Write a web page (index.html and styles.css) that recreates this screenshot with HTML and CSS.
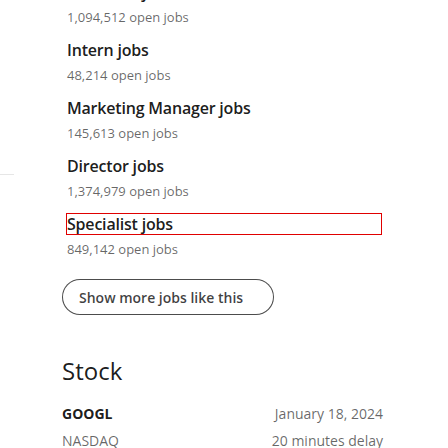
FILE: index.html
```html
<!DOCTYPE html>
<html lang="en">
<head>
<meta charset="utf-8">
<title>Jobs</title>
<link rel="stylesheet" href="styles.css">
</head>
<body>
<div class="page">
  <aside class="side"><div class="side-rule"></div></aside>
  <main class="main">
    <ul class="jobs">
      <li class="job"><a class="job-title">Associate jobs</a><div class="job-count">1,094,512 open jobs</div></li>
      <li class="job"><a class="job-title">Intern jobs</a><div class="job-count">48,214 open jobs</div></li>
      <li class="job"><a class="job-title">Marketing Manager jobs</a><div class="job-count">145,613 open jobs</div></li>
      <li class="job"><a class="job-title">Director jobs</a><div class="job-count">1,374,979 open jobs</div></li>
      <li class="job"><a class="job-title is-marked">Specialist jobs</a><div class="job-count">849,142 open jobs</div></li>
    </ul>
    <button class="more-btn">Show more jobs like this</button>
    <section class="stock">
      <h2 class="stock-title">Stock</h2>
      <div class="stock-row">
        <span class="ticker">GOOGL</span>
        <span class="meta">January 18, 2024</span>
      </div>
      <div class="stock-row">
        <span class="exchange">NASDAQ</span>
        <span class="meta">20 minutes delay</span>
      </div>
    </section>
  </main>
</div>
</body>
</html>
```

FILE: styles.css
```css
* { box-sizing: border-box; }
html, body { margin: 0; padding: 0; background: #fff; }
body {
  font-family: "Open Sans", "Noto Sans", sans-serif;
  color: rgba(0,0,0,.9);
  overflow: hidden;
  height: 448px;
}
.page { display: flex; }
.side { width: 14px; flex: none; }
.side-rule { margin-top: 174px; height: 1px; background: #e6e6e6; }
.main { width: 321px; margin-left: 48px; flex: none; }
.jobs {
  list-style: none;
  margin: -18px 0 0;
  padding: 0 2px 0 5px;
}
.job { margin-bottom: 13px; }
.job:last-child { margin-bottom: 0; }
.job-title {
  display: block;
  font-size: 16px;
  font-weight: 600;
  line-height: 20px;
  color: rgba(0,0,0,.9);
  letter-spacing: -0.2px;
}
.job-title.is-marked { outline: 1px solid #e00000; }
.job-count {
  margin-top: 5px;
  font-size: 13px;
  line-height: 20px;
  color: rgba(0,0,0,.6);
}
.more-btn {
  display: block;
  margin-top: 20px;
  width: 212px;
  height: 36px;
  padding: 0 16px;
  text-align: left;
  border: 1px solid rgba(0,0,0,.7);
  border-radius: 18px;
  background: #fff;
  font-family: inherit;
  font-size: 14px;
  font-weight: 600;
  color: rgba(0,0,0,.75);
}
.stock { margin-top: 40px; }
.stock-title {
  margin: 0 0 17px;
  font-size: 24px;
  font-weight: 400;
  line-height: 32px;
}
.stock-row {
  display: flex;
  justify-content: space-between;
  font-size: 14px;
  line-height: 20px;
  margin-bottom: 7px;
}
.ticker { font-weight: 700; color: rgba(0,0,0,.9); }
.exchange { color: rgba(0,0,0,.6); }
.meta { color: rgba(0,0,0,.6); }
```
